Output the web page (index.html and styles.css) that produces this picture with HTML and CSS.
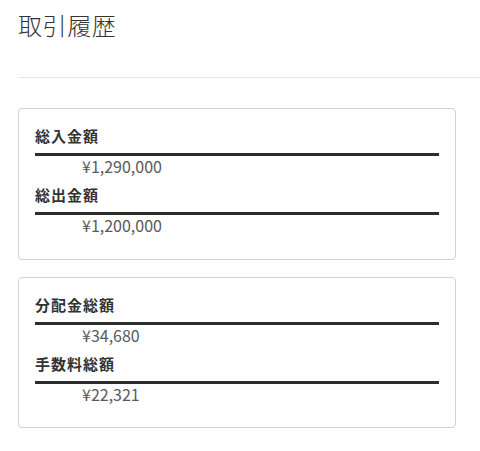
FILE: index.html
```html
<!DOCTYPE html>
<html lang="ja">
<head>
<meta charset="utf-8">
<link rel="stylesheet" href="styles.css">
</head>
<body>
<div class="page">
  <h1 class="title">取引履歴</h1>
  <hr class="divider">
  <div class="cards">
    <section class="card">
      <dl class="stats">
        <dt>総入金額</dt>
        <dd>¥1,290,000</dd>
        <dt>総出金額</dt>
        <dd>¥1,200,000</dd>
      </dl>
    </section>
    <section class="card">
      <dl class="stats">
        <dt>分配金総額</dt>
        <dd>¥34,680</dd>
        <dt>手数料総額</dt>
        <dd>¥22,321</dd>
      </dl>
    </section>
  </div>
</div>
</body>
</html>
```
FILE: styles.css
```css
html, body {
  margin: 0;
  padding: 0;
  background: #fff;
}
body {
  font-family: "Noto Sans CJK JP", "Noto Sans", sans-serif;
  color: #333;
}
.page {
  padding: 8px 0 0 18px;
}
.title {
  margin: 0;
  font-size: 24px;
  font-weight: 300;
  line-height: 34px;
  letter-spacing: 0.6px;
  color: #333;
}
.divider {
  margin: 35px 0 0 0;
  border: 0;
  border-top: 1px solid #e6e6e6;
  height: 0;
}
.cards {
  margin-top: 30px;
  width: 438px;
  display: flex;
  flex-direction: column;
  gap: 17px;
}
.card {
  border: 1px solid #d2d2d2;
  border-radius: 4px;
  padding: 17px 16px 23px 16px;
}
.cards .card:first-child {
  padding-bottom: 24px;
}
.stats {
  margin: 0;
}
.stats dt {
  font-size: 15px;
  font-weight: 700;
  line-height: 20px;
  letter-spacing: 1px;
  padding-bottom: 7px;
  border-bottom: 3px solid #2d2d2d;
  color: #333;
}
.stats dd + dt {
  margin-top: 9px;
}
.stats dd {
  margin: 0 0 0 47px;
  font-size: 16px;
  line-height: 20px;
  color: #5a5a5a;
}
```
